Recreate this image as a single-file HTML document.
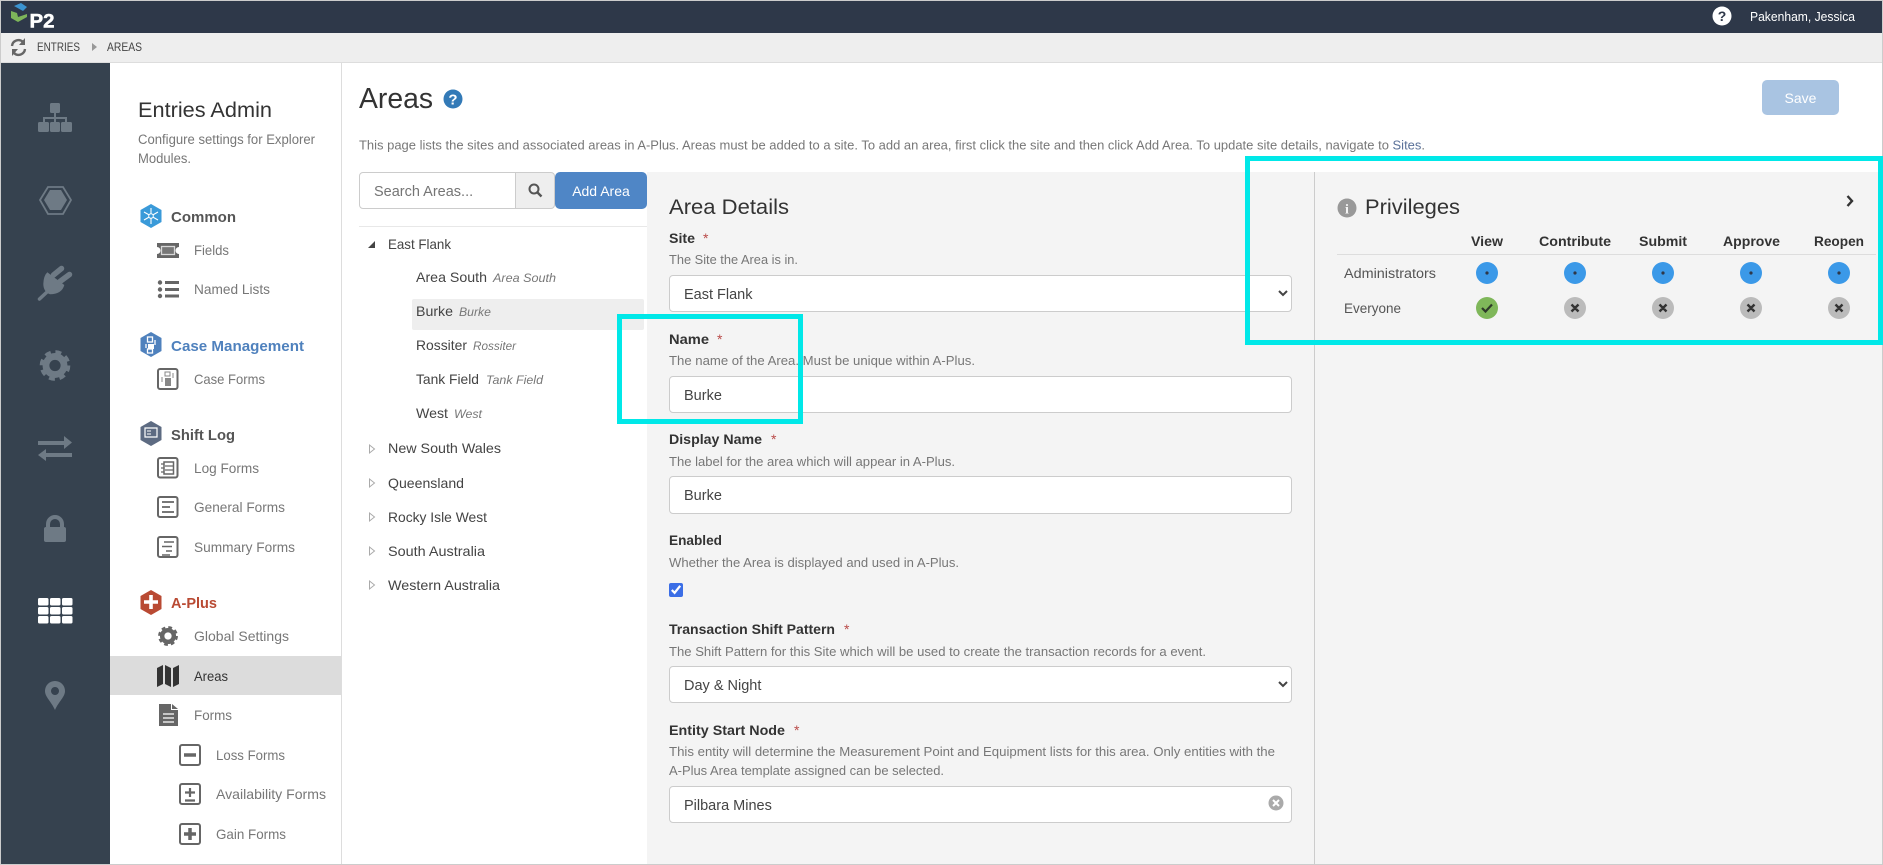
<!DOCTYPE html>
<html lang="en"><head><meta charset="utf-8"><title>Areas</title>
<style>
html,body{margin:0;padding:0;width:1883px;height:865px;overflow:hidden;background:#fff;font-family:"Liberation Sans",Arial,sans-serif}
.a{position:absolute;box-sizing:border-box}
input.a,select.a{font:14.5px "Liberation Sans",Arial,sans-serif;color:#444;background:#fff;border:1px solid #ccc;border-radius:4px;padding:2px 14px 0;outline:0}
select.a{padding:2px 10px 0}
button.a{font:14px "Liberation Sans",Arial,sans-serif;color:#fff;border:0;border-radius:5px;padding:0}
svg{position:absolute;left:0;top:0;pointer-events:none}
</style></head><body>
<div class="a" style="left:0;top:0;width:1883px;height:865px;border:1px solid #ccc"></div>
<div class="a" style="left:1px;top:1px;width:1881px;height:32px;background:#2e3849"></div>
<div class="a" style="left:1px;top:33px;width:1881px;height:30px;background:#eee;border-bottom:1px solid #ddd"></div>
<div class="a" style="left:1px;top:63px;width:109px;height:801px;background:#36424f"></div>
<div class="a" style="left:341px;top:63px;width:1px;height:801px;background:#ddd"></div>
<div class="a" style="left:110px;top:656px;width:231px;height:39px;background:#dcdcdc"></div>
<div class="a" style="left:647px;top:172px;width:1235px;height:692px;background:#f4f4f4"></div>
<div class="a" style="left:1314px;top:172px;width:1px;height:692px;background:#ccc"></div>
<input class="a" style="left:359px;top:172px;width:157px;height:37px;border-radius:4px 0 0 4px" placeholder="Search Areas...">
<div class="a" style="left:515px;top:172px;width:40px;height:37px;background:#eee;border:1px solid #ccc;border-radius:0 4px 4px 0"></div>
<button class="a" style="left:555px;top:172px;width:92px;height:37px;background:#4f86c6">Add Area</button>
<div class="a" style="left:359px;top:226px;width:288px;height:1px;background:#e8e8e8"></div>
<div class="a" style="left:412px;top:299px;width:232px;height:31px;background:#eee;border-radius:2px"></div>
<button class="a" style="left:1762px;top:80px;width:77px;height:35px;background:#a9c4e2">Save</button>
<div class="a" style="left:1337px;top:254px;width:539px;height:1px;background:#ddd"></div>
<select class="a" style="left:669px;top:275px;width:623px;height:37px"><option>East Flank</option></select>
<input class="a" style="left:669px;top:376px;width:623px;height:37px" value="Burke">
<input class="a" style="left:669px;top:476px;width:623px;height:38px" value="Burke">
<input class="a" type="checkbox" checked style="left:669px;top:583px;width:14px;height:14px;margin:0;padding:0;accent-color:#3b6ee6">
<select class="a" style="left:669px;top:666px;width:623px;height:37px"><option>Day &amp; Night</option></select>
<input class="a" style="left:669px;top:786px;width:623px;height:37px" value="Pilbara Mines">

<svg width="1883" height="865" viewBox="0 0 1883 865" font-family="'Liberation Sans',Arial,sans-serif">
<defs>
<g id="gear"><circle r="8.6" fill="none" stroke="currentColor" stroke-width="6.5"/><circle r="12.6" fill="none" stroke="currentColor" stroke-width="4" stroke-dasharray="5.500 4.400"/></g>
</defs>
<!-- logo -->
<polygon points="14,6 21,3 27,7 23,11" fill="#3b93d0"/>
<polygon points="11,11 17,13 18,17 27,14 27,17 18,22 11,18" fill="#7db55a"/>
<text x="29.500" y="27.500" font-size="19" font-weight="700" fill="#fff" stroke="#fff" stroke-width=".5" textLength="25" lengthAdjust="spacingAndGlyphs">P2</text>
<!-- breadcrumb -->
<g fill="none" stroke="#666" stroke-width="2.400"><path d="M12 46a6.500 6.500 0 0 1 11-4"/><path d="M25 49a6.500 6.500 0 0 1-11 4"/></g>
<polygon points="25,38 25,45 19,45" fill="#666"/><polygon points="12,56 12,49 18,49" fill="#666"/>
<polygon points="92,43 97,47 92,51" fill="#999"/>
<g font-size="12" fill="#444"><text x="37" y="51" textLength="43" lengthAdjust="spacingAndGlyphs">ENTRIES</text><text x="107" y="51" textLength="35" lengthAdjust="spacingAndGlyphs">AREAS</text></g>
<!-- top right -->
<circle cx="1722" cy="16" r="9.500" fill="#fff"/><text x="1722" y="21" font-size="14" font-weight="700" text-anchor="middle" fill="#2e3849">?</text>
<text x="1750" y="21" font-size="13" fill="#fff" textLength="105" lengthAdjust="spacingAndGlyphs">Pakenham, Jessica</text>
<!-- side rail -->
<g fill="#6e7a85">
<rect x="50" y="103" width="10" height="10" rx="1.500"/><rect x="38" y="122" width="11" height="10" rx="1.500"/><rect x="50" y="122" width="10" height="10" rx="1.500"/><rect x="61" y="122" width="11" height="10" rx="1.500"/>
<path d="M54 113h2v4h11v5h-2v-3H56v3h-2v-3H45v3h-2v-5h11z"/>
<polygon points="40,200 48,187 63,187 71,200 63,214 48,214" fill="none" stroke="#6e7a85" stroke-width="1.800"/>
<polygon points="44,200 50,190 61,190 67,200 61,210 50,210"/>
<path d="M47.300 272.300L64.300 285Q62 294 50 294.300Q43.500 292 43.300 284Q43.500 276 47.300 272.300z"/>
<path d="M53.500 275L61.500 268.500M60 281.500L69.500 274.500" stroke="#6e7a85" stroke-width="5.500" stroke-linecap="round" fill="none"/>
<path d="M47 292L39.500 299" stroke="#6e7a85" stroke-width="3.500" stroke-linecap="round" fill="none"/>
<polygon points="38,441 64,441 64,436 72,442.500 64,449 64,445 38,445"/>
<polygon points="72,453 46,453 46,449 38,455 46,461 46,457 72,457"/>
<rect x="44" y="527" width="22" height="15" rx="2"/>
<path d="M48 527v-3a7 7 0 0 1 14 0v3" fill="none" stroke="#6e7a85" stroke-width="4"/>
<path fill-rule="evenodd" d="M55 710C51 701 45 697 45 691a10 10 0 0 1 20 0C65 697 59 701 55 710zM55 687a4 4 0 1 0 .01 0z"/>
</g>
<use href="#gear" transform="translate(55,365.500) scale(1.050)" color="#6e7a85"/>
<g fill="#fff">
<rect x="38" y="598" width="10.500" height="7.500" rx="1.500"/><rect x="50" y="598" width="10.500" height="7.500" rx="1.500"/><rect x="62" y="598" width="10.500" height="7.500" rx="1.500"/>
<rect x="38" y="607" width="10.500" height="7.500" rx="1.500"/><rect x="50" y="607" width="10.500" height="7.500" rx="1.500"/><rect x="62" y="607" width="10.500" height="7.500" rx="1.500"/>
<rect x="38" y="616" width="10.500" height="7.500" rx="1.500"/><rect x="50" y="616" width="10.500" height="7.500" rx="1.500"/><rect x="62" y="616" width="10.500" height="7.500" rx="1.500"/>
</g>
<!-- panel text -->
<text x="138" y="117" font-size="21" fill="#333" textLength="134" lengthAdjust="spacingAndGlyphs">Entries Admin</text>
<g font-size="13.500" fill="#777"><text x="138" y="144" textLength="177" lengthAdjust="spacingAndGlyphs">Configure settings for Explorer</text><text x="138" y="163" textLength="53" lengthAdjust="spacingAndGlyphs">Modules.</text></g>
<g font-size="15" font-weight="700">
<text x="171" y="222" fill="#555" textLength="65" lengthAdjust="spacingAndGlyphs">Common</text>
<text x="171" y="351" fill="#4f81bd" textLength="133" lengthAdjust="spacingAndGlyphs">Case Management</text>
<text x="171" y="440" fill="#555" textLength="64" lengthAdjust="spacingAndGlyphs">Shift Log</text>
<text x="171" y="608" fill="#b94a33" textLength="46" lengthAdjust="spacingAndGlyphs">A-Plus</text>
</g>
<g font-size="14" fill="#777">
<text x="194" y="255" textLength="35" lengthAdjust="spacingAndGlyphs">Fields</text>
<text x="194" y="294" textLength="76" lengthAdjust="spacingAndGlyphs">Named Lists</text>
<text x="194" y="384" textLength="71" lengthAdjust="spacingAndGlyphs">Case Forms</text>
<text x="194" y="473" textLength="65" lengthAdjust="spacingAndGlyphs">Log Forms</text>
<text x="194" y="512" textLength="91" lengthAdjust="spacingAndGlyphs">General Forms</text>
<text x="194" y="552" textLength="101" lengthAdjust="spacingAndGlyphs">Summary Forms</text>
<text x="194" y="641" textLength="95" lengthAdjust="spacingAndGlyphs">Global Settings</text>
<text x="194" y="681" fill="#333" textLength="34" lengthAdjust="spacingAndGlyphs">Areas</text>
<text x="194" y="720" textLength="38" lengthAdjust="spacingAndGlyphs">Forms</text>
<text x="216" y="760" textLength="69" lengthAdjust="spacingAndGlyphs">Loss Forms</text>
<text x="216" y="799" textLength="110" lengthAdjust="spacingAndGlyphs">Availability Forms</text>
<text x="216" y="839" textLength="70" lengthAdjust="spacingAndGlyphs">Gain Forms</text>
</g>
<!-- hex badges -->
<polygon points="151,204 161.500,210 161.500,222 151,228 140.500,222 140.500,210" fill="#3a9ad9"/>
<g stroke="#fff" stroke-width="1.100"><path d="M151 208v16M144 212l14 8M158 212l-14 8"/></g><circle cx="151" cy="216" r="2.300" fill="#3a9ad9" stroke="#fff" stroke-width="1"/>
<polygon points="151,332 161.500,338 161.500,351 151,357 140.500,351 140.500,338" fill="#4f81bd"/>
<g fill="none" stroke="#fff" stroke-width="1.300"><rect x="147.500" y="337" width="5" height="5"/><rect x="147.500" y="349" width="5" height="4"/><path d="M146 344v4M155 340v5"/></g><rect x="148" y="344" width="6" height="5" fill="#fff"/>
<polygon points="151,421 161.500,427 161.500,440 151,446 140.500,440 140.500,427" fill="#5d6b82"/>
<path d="M145 428h12v9h-12z" fill="none" stroke="#fff" stroke-width="1.200"/><path d="M147 431h4M147 434h4" stroke="#fff" stroke-width="1.100"/>
<polygon points="151,590 161.500,596 161.500,609 151,615 140.500,609 140.500,596" fill="#b94a33"/>
<path d="M151 595v14M144 602h14" stroke="#fff" stroke-width="3.600"/>
<!-- panel icons -->
<g fill="#666">
<path d="M157 243h22v4a3 3 0 0 0 0 7v4h-22v-4a3 3 0 0 0 0-7z"/><rect x="161.500" y="246.500" width="13" height="8" fill="#777" stroke="#d8d8d8" stroke-width="1.300"/>
<circle cx="160" cy="282.500" r="2.200"/><circle cx="160" cy="289.500" r="2.200"/><circle cx="160" cy="296" r="2.200"/>
<rect x="165" y="281" width="14" height="3"/><rect x="165" y="288" width="14" height="3"/><rect x="165" y="294.500" width="14" height="3"/>
</g>
<g fill="none" stroke="#666" stroke-width="2">
<rect x="158" y="369" width="19.500" height="20" rx="2"/>
<rect x="158" y="458" width="19.500" height="19.500" rx="2"/>
<rect x="158" y="497" width="19.500" height="20" rx="2"/>
<rect x="158" y="537" width="19.500" height="20" rx="2"/>
<rect x="180" y="745" width="20" height="20" rx="2"/>
<rect x="180" y="784" width="20" height="20" rx="2"/>
<rect x="180" y="824" width="20" height="20" rx="2"/>
</g>
<rect x="165" y="372" width="5" height="4" fill="none" stroke="#888" stroke-width="1"/><rect x="165" y="378" width="6" height="8" fill="#888"/><path d="M162 377v5M173 373v5" stroke="#888"/>
<rect x="164" y="462" width="9.500" height="12" fill="none" stroke="#666" stroke-width="1.500"/><path d="M161 464h3M161 468h3M161 472h3M165 466h8M165 470h8" stroke="#666" stroke-width="1.300"/>
<path d="M162 502h12M162 507h8M162 512h12" stroke="#666" stroke-width="1.800"/>
<path d="M164 542h10M162 546.500h10M166 551h6M162 555h8" stroke="#666" stroke-width="1.600"/>
<path d="M184 755h12" stroke="#666" stroke-width="3.500"/>
<path d="M190 788v9M185 792.500h10M185 800.500h10" stroke="#666" stroke-width="2.200"/>
<path d="M190 828v12M184 834h12" stroke="#666" stroke-width="3.500"/>
<use href="#gear" transform="translate(168,636) scale(.68)" color="#666"/>
<path d="M157 668l6-3v19l-6 3zM165 665l6 3v19l-6-3zM173 668l6-3v19l-6 3z" fill="#333"/>
<path d="M159 704h12v6h7v16h-19z" fill="#666"/><path d="M172 704l6 5h-6z" fill="#666"/><path d="M163 714h11M163 718h11M163 722h11" stroke="#fff" stroke-width="1.200"/>
<!-- main header -->
<text x="359" y="108" font-size="29" fill="#333" textLength="74" lengthAdjust="spacingAndGlyphs">Areas</text>
<circle cx="453" cy="99" r="9.500" fill="#337ab7"/><text x="453" y="104.500" font-size="15" font-weight="700" fill="#fff" text-anchor="middle">?</text>
<text x="359" y="149.500" font-size="13" fill="#777" textLength="1066" lengthAdjust="spacingAndGlyphs">This page lists the sites and associated areas in A-Plus. Areas must be added to a site. To add an area, first click the site and then click Add Area. To update site details, navigate to <tspan fill="#5a7199">Sites</tspan>.</text>
<circle cx="534" cy="189" r="4.500" fill="none" stroke="#555" stroke-width="2"/><path d="M537.500 192.500l4 4" stroke="#555" stroke-width="2.400"/>
<!-- tree -->
<polygon points="368,248 375,248 375,241" fill="#444"/>
<g font-size="14" fill="#444">
<text x="388" y="249" textLength="63" lengthAdjust="spacingAndGlyphs">East Flank</text>
<text x="416" y="282" textLength="71" lengthAdjust="spacingAndGlyphs">Area South</text>
<text x="416" y="316" textLength="37" lengthAdjust="spacingAndGlyphs">Burke</text>
<text x="416" y="350" textLength="51" lengthAdjust="spacingAndGlyphs">Rossiter</text>
<text x="416" y="384" textLength="63" lengthAdjust="spacingAndGlyphs">Tank Field</text>
<text x="416" y="418" textLength="32" lengthAdjust="spacingAndGlyphs">West</text>
<text x="388" y="453" textLength="113" lengthAdjust="spacingAndGlyphs">New South Wales</text>
<text x="388" y="488" textLength="76" lengthAdjust="spacingAndGlyphs">Queensland</text>
<text x="388" y="522" textLength="99" lengthAdjust="spacingAndGlyphs">Rocky Isle West</text>
<text x="388" y="556" textLength="97" lengthAdjust="spacingAndGlyphs">South Australia</text>
<text x="388" y="590" textLength="112" lengthAdjust="spacingAndGlyphs">Western Australia</text>
</g>
<g font-size="12" font-style="italic" fill="#777">
<text x="493" y="282" textLength="63" lengthAdjust="spacingAndGlyphs">Area South</text>
<text x="459" y="316" textLength="32" lengthAdjust="spacingAndGlyphs">Burke</text>
<text x="473" y="350" textLength="43" lengthAdjust="spacingAndGlyphs">Rossiter</text>
<text x="486" y="384" textLength="57" lengthAdjust="spacingAndGlyphs">Tank Field</text>
<text x="454" y="418" textLength="28" lengthAdjust="spacingAndGlyphs">West</text>
</g>
<g fill="#fff" stroke="#aaa" stroke-width="1">
<polygon points="369.500,445 369.500,453 374.500,449"/><polygon points="369.500,479 369.500,487 374.500,483"/><polygon points="369.500,513 369.500,521 374.500,517"/><polygon points="369.500,547 369.500,555 374.500,551"/><polygon points="369.500,581 369.500,589 374.500,585"/>
</g>
<!-- form -->
<text x="669" y="214" font-size="21" fill="#333" textLength="120" lengthAdjust="spacingAndGlyphs">Area Details</text>
<g font-size="13.500" font-weight="700" fill="#333">
<text x="669" y="243" textLength="26" lengthAdjust="spacingAndGlyphs">Site</text>
<text x="669" y="344" textLength="40" lengthAdjust="spacingAndGlyphs">Name</text>
<text x="669" y="444" textLength="93" lengthAdjust="spacingAndGlyphs">Display Name</text>
<text x="669" y="545" textLength="53" lengthAdjust="spacingAndGlyphs">Enabled</text>
<text x="669" y="634" textLength="166" lengthAdjust="spacingAndGlyphs">Transaction Shift Pattern</text>
<text x="669" y="735" textLength="116" lengthAdjust="spacingAndGlyphs">Entity Start Node</text>
</g>
<g font-size="14" fill="#b94a48">
<text x="703" y="243">*</text><text x="717" y="344">*</text><text x="771" y="444">*</text><text x="844" y="634">*</text><text x="794" y="735">*</text>
</g>
<g font-size="12.500" fill="#777">
<text x="669" y="264" textLength="129" lengthAdjust="spacingAndGlyphs">The Site the Area is in.</text>
<text x="669" y="365" textLength="306" lengthAdjust="spacingAndGlyphs">The name of the Area. Must be unique within A-Plus.</text>
<text x="669" y="466" textLength="286" lengthAdjust="spacingAndGlyphs">The label for the area which will appear in A-Plus.</text>
<text x="669" y="567" textLength="290" lengthAdjust="spacingAndGlyphs">Whether the Area is displayed and used in A-Plus.</text>
<text x="669" y="656" textLength="537" lengthAdjust="spacingAndGlyphs">The Shift Pattern for this Site which will be used to create the transaction records for a event.</text>
<text x="669" y="756" textLength="606" lengthAdjust="spacingAndGlyphs">This entity will determine the Measurement Point and Equipment lists for this area. Only entities with the</text>
<text x="669" y="775" textLength="275" lengthAdjust="spacingAndGlyphs">A-Plus Area template assigned can be selected.</text>
</g>
<circle cx="1276" cy="803" r="7.500" fill="#aaa"/><path d="M1273 800l6 6M1279 800l-6 6" stroke="#fff" stroke-width="2"/>
<!-- privileges -->
<circle cx="1347" cy="208" r="9.500" fill="#999"/><text x="1347" y="213.500" font-size="14" font-weight="700" font-family="'Liberation Serif',serif" fill="#f4f4f4" text-anchor="middle">i</text>
<text x="1365" y="214" font-size="21" fill="#333" textLength="95" lengthAdjust="spacingAndGlyphs">Privileges</text>
<path d="M1847.500 196l4.500 5-4.500 5" fill="none" stroke="#333" stroke-width="2.400"/>
<g font-size="13.500" font-weight="700" fill="#333">
<text x="1471" y="246" textLength="32" lengthAdjust="spacingAndGlyphs">View</text>
<text x="1539" y="246" textLength="72" lengthAdjust="spacingAndGlyphs">Contribute</text>
<text x="1639" y="246" textLength="48" lengthAdjust="spacingAndGlyphs">Submit</text>
<text x="1723" y="246" textLength="57" lengthAdjust="spacingAndGlyphs">Approve</text>
<text x="1814" y="246" textLength="50" lengthAdjust="spacingAndGlyphs">Reopen</text>
</g>
<g font-size="13.500" fill="#555"><text x="1344" y="278" textLength="92" lengthAdjust="spacingAndGlyphs">Administrators</text><text x="1344" y="313" textLength="57" lengthAdjust="spacingAndGlyphs">Everyone</text></g>
<g fill="#3b99e8"><circle cx="1487" cy="273" r="11"/><circle cx="1575" cy="273" r="11"/><circle cx="1663" cy="273" r="11"/><circle cx="1751" cy="273" r="11"/><circle cx="1839" cy="273" r="11"/></g>
<g fill="#2e3849"><circle cx="1487" cy="273" r="1.600"/><circle cx="1575" cy="273" r="1.600"/><circle cx="1663" cy="273" r="1.600"/><circle cx="1751" cy="273" r="1.600"/><circle cx="1839" cy="273" r="1.600"/></g>
<circle cx="1487" cy="308" r="11" fill="#7fb75a"/><path d="M1482 308l3.500 3.500 6.500-7" fill="none" stroke="#2e3a2a" stroke-width="2.200"/>
<g fill="#bbb"><circle cx="1575" cy="308" r="11"/><circle cx="1663" cy="308" r="11"/><circle cx="1751" cy="308" r="11"/><circle cx="1839" cy="308" r="11"/></g>
<g stroke="#333" stroke-width="2.400"><path d="M1571.500 304.500l7 7M1578.500 304.500l-7 7M1659.500 304.500l7 7M1666.500 304.500l-7 7M1747.500 304.500l7 7M1754.500 304.500l-7 7M1835.500 304.500l7 7M1842.500 304.500l-7 7"/></g>
<!-- callout frames -->
<rect x="619.500" y="316.500" width="181" height="105" fill="none" stroke="#00e8e8" stroke-width="5"/>
<rect x="1247.500" y="158.500" width="633" height="184" fill="none" stroke="#00e8e8" stroke-width="5"/>
</svg>
</body></html>
